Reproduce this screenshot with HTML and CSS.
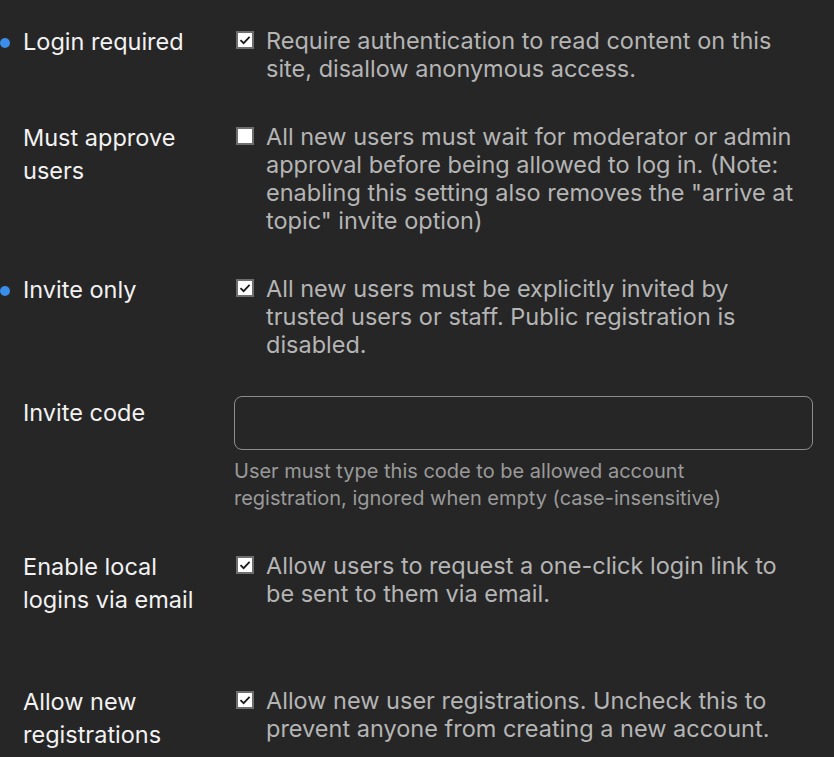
FILE: index.html
```html
<!DOCTYPE html>
<html lang="en">
<head>
  <meta charset="UTF-8" />
  <meta name="viewport" content="width=device-width, initial-scale=1.0"/>
  <title>Login settings</title>
  <link rel="stylesheet" href="styles.css">
</head>
<body>
  <div class="settings">

    <!-- Login required -->
    <div class="setting overridden">
      <div class="setting-label"><h3>Login required</h3></div>
      <div class="setting-value">
        <label class="checkbox">
          <svg class="box" viewBox="0 0 18 18"><rect x="1" y="1" width="16" height="16" /><path d="M4.5 9.2 L7.6 12.2 L13.6 5.8" /></svg>
          <span>Require authentication to read content on this site, disallow anonymous access.</span>
        </label>
      </div>
    </div>

    <!-- Must approve users -->
    <div class="setting">
      <div class="setting-label"><h3>Must approve users</h3></div>
      <div class="setting-value">
        <label class="checkbox">
          <svg class="box" viewBox="0 0 18 18"><rect x="1" y="1" width="16" height="16" /></svg>
          <span>All new users must wait for moderator or admin approval before being allowed to log in. (Note: enabling this setting also removes the "arrive at topic" invite option)</span>
        </label>
      </div>
    </div>

    <!-- Invite only -->
    <div class="setting overridden">
      <div class="setting-label"><h3>Invite only</h3></div>
      <div class="setting-value">
        <label class="checkbox">
          <svg class="box" viewBox="0 0 18 18"><rect x="1" y="1" width="16" height="16" /><path d="M4.5 9.2 L7.6 12.2 L13.6 5.8" /></svg>
          <span>All new users must be explicitly invited by trusted users or staff. Public registration is disabled.</span>
        </label>
      </div>
    </div>

    <!-- Invite code -->
    <div class="setting setting-text">
      <div class="setting-label"><h3>Invite code</h3></div>
      <div class="setting-value">
        <input type="text" class="input-setting" />
        <div class="desc">User must type this code to be allowed account registration, ignored when empty (case-insensitive)</div>
      </div>
    </div>

    <!-- Enable local logins via email -->
    <div class="setting setting-tall">
      <div class="setting-label"><h3>Enable local logins via email</h3></div>
      <div class="setting-value">
        <label class="checkbox">
          <svg class="box" viewBox="0 0 18 18"><rect x="1" y="1" width="16" height="16" /><path d="M4.5 9.2 L7.6 12.2 L13.6 5.8" /></svg>
          <span>Allow users to request a one-click login link to be sent to them via email.</span>
        </label>
      </div>
    </div>

    <!-- Allow new registrations -->
    <div class="setting">
      <div class="setting-label"><h3>Allow new registrations</h3></div>
      <div class="setting-value">
        <label class="checkbox">
          <svg class="box" viewBox="0 0 18 18"><rect x="1" y="1" width="16" height="16" /><path d="M4.5 9.2 L7.6 12.2 L13.6 5.8" /></svg>
          <span>Allow new user registrations. Uncheck this to prevent anyone from creating a new account.</span>
        </label>
      </div>
    </div>

  </div>
</body>
</html>
```

FILE: styles.css
```css
body {
  margin: 0;
  font-family: Inter, "Noto Sans", sans-serif;
  background-color: #262626;
  color: #b5b5b5;
}

.settings {
  padding: 27px 21px 0 23px;
}

.setting {
  position: relative;
  display: grid;
  grid-template-columns: 211px 1fr;
  margin-bottom: 40px;
}

/* blue dot for settings changed from default */
.setting.overridden::before {
  content: "";
  position: absolute;
  left: -23px;
  top: 11px;
  width: 10px;
  height: 10px;
  border-radius: 50%;
  background-color: #3b8dea;
}

.setting-label h3 {
  margin: -2px 0 0;
  max-width: 190px;
  font-size: 23.5px;
  font-weight: normal;
  line-height: 33px;
  color: #f2f2f2;
}

.checkbox {
  display: flex;
  align-items: flex-start;
  gap: 12px;
  font-size: 23.5px;
  line-height: 28px;
}

.checkbox span {
  max-width: 538px;
}

.box {
  flex: none;
  width: 18px;
  height: 18px;
  margin-left: 2px;
  margin-top: 4px;
}

.box rect {
  fill: #fff;
  stroke: #6e6e6e;
  stroke-width: 2;
}

.box path {
  fill: none;
  stroke: #1a1a1a;
  stroke-width: 1.8;
}

.setting-text {
  margin-top: -3px;
}

.setting-text h3 {
  margin-top: 0;
}

.input-setting {
  box-sizing: border-box;
  display: block;
  width: 100%;
  height: 54px;
  background: #262626;
  border: 1px solid #8c8c8c;
  border-radius: 8px;
}

.desc {
  margin-top: 8px;
  max-width: 500px;
  font-size: 20px;
  line-height: 27px;
  color: #9a9a9a;
}

.setting-tall {
  margin-bottom: 71px;
}
```
